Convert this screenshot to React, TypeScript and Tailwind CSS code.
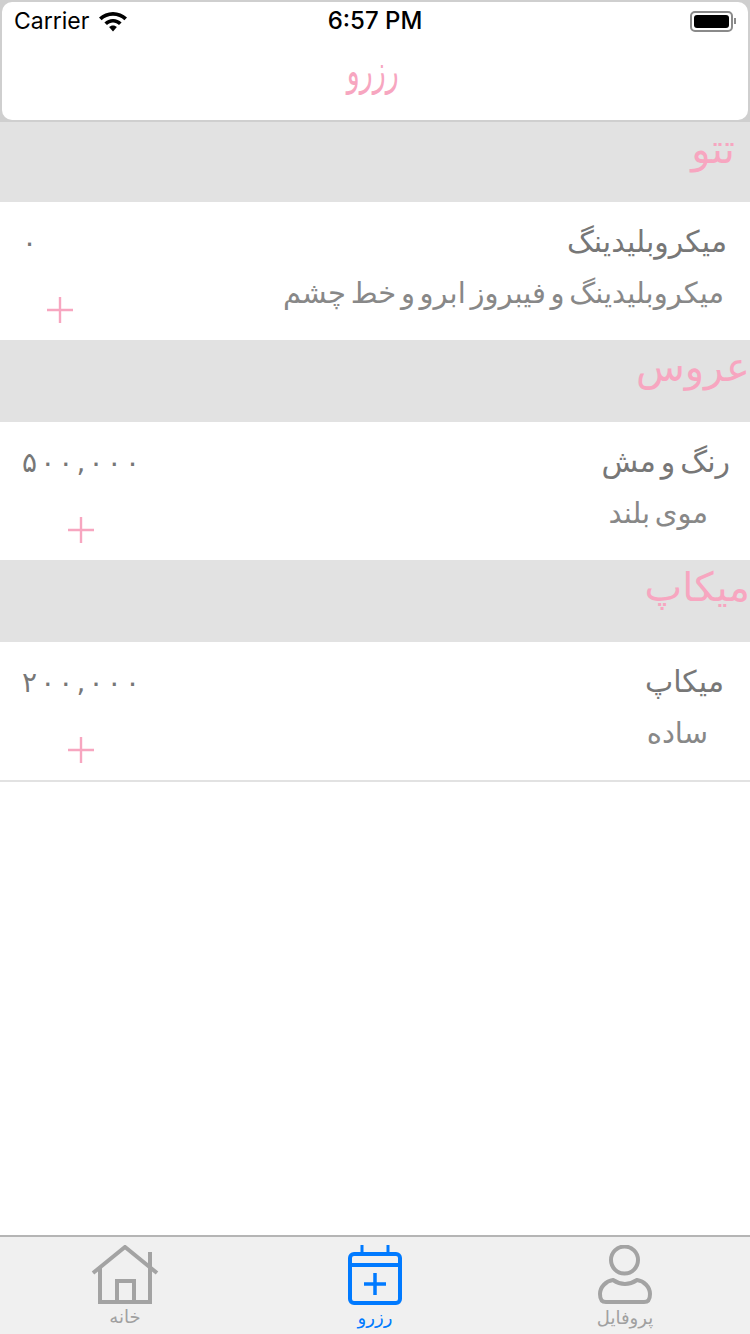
import type { ReactNode } from 'react'

const arabic = 'font-["DejaVu_Sans",sans-serif]'

function SectionHeader({ title, className }: { title: string; className: string }) {
  return (
    <div dir="rtl" className={`bg-[#e2e2e2] text-[40px] leading-[54px] text-[#f7a6c0] ${arabic} ${className}`}>
      {title}
    </div>
  )
}

function Plus() {
  return (
    <svg width="26" height="26" viewBox="0 0 26 26" fill="none" stroke="#f7a6c0" strokeWidth="2.4">
      <path d="M13 0v26M0 13h26" />
    </svg>
  )
}

type RowProps = {
  name: string
  detail: string
  price: string
  namePad: string
  detailPad: string
  priceWidth: string
  bordered?: boolean
}

function ServiceRow({ name, detail, price, namePad, detailPad, priceWidth, bordered }: RowProps) {
  return (
    <div className={`flex justify-between bg-white pl-[22px] pt-[22px] ${arabic} ${bordered ? 'h-[140px] border-b-2 border-[#e2e2e2]' : 'h-[138px]'}`}>
      <div className={`flex flex-col ${priceWidth}`}>
        {/* letter spacing has no effect on these digits, so they are spread with flex */}
        <div dir="ltr" className="mt-[1px] flex h-[35px] justify-between text-[28px] leading-[36px] text-[#777]">
          {price.split('').map((ch, i) => (
            <span key={i}>{ch}</span>
          ))}
        </div>
        <div className="mt-[37px] flex justify-center"><Plus /></div>
      </div>
      <div dir="rtl" className="flex flex-col text-[#777] [word-spacing:-4.5px]">
        <div className={`h-[36px] text-[30px] leading-[36px] ${namePad}`}>{name}</div>
        <div className={`mt-[15px] text-[29px] leading-[36px] text-[#888] ${detailPad}`}>{detail}</div>
      </div>
    </div>
  )
}

function TabItem({ icon, label, color, mt }: { icon: ReactNode; label: string; color: string; mt: string }) {
  return (
    <div className="flex flex-1 flex-col items-center pt-[8px]">
      {icon}
      <div className={`text-[18px] leading-[22px] ${arabic} ${color} ${mt}`}>{label}</div>
    </div>
  )
}

export default function App() {
  return (
    <div className="flex h-[1334px] w-[750px] flex-col overflow-hidden bg-white">
      <div className="bg-[#cfcfcf] p-[2px]">
        <div className="h-[118px] rounded-[10px] bg-white">
          <div className="flex h-[38px] items-center justify-between px-[12px] font-['Inter',sans-serif] text-[24px] text-black">
            <div className="flex w-[200px] items-center gap-[9px]">
              <span className="text-[23px]">Carrier</span>
              <svg width="30" height="24" viewBox="0 0 30 24" fill="#000">
                <path d="M15 3C9.600 3 4.800 5.100 1 8.600l2.600 2.700C6.600 8.500 10.600 6.800 15 6.800s8.400 1.700 11.400 4.500L29 8.600C25.200 5.100 20.400 3 15 3z" />
                <path d="M15 10c-3.300 0-6.300 1.300-8.600 3.400L9 16c1.600-1.500 3.700-2.400 6-2.400s4.400.9 6 2.400l2.600-2.600C21.300 11.300 18.300 10 15 10z" />
                <path d="M15 16.500c-1.500 0-2.900.6-3.900 1.600L15 22.500l3.900-4.400c-1-1-2.400-1.600-3.900-1.600z" />
              </svg>
            </div>
            <span className="font-medium">6:57 PM</span>
            <div className="flex w-[200px] items-center justify-end">
              <div className="flex h-[21px] w-[43px] items-center rounded-[5px] border-2 border-[#8a8a8a] p-[2px]">
                <div className="h-full w-full rounded-[3px] bg-black" />
              </div>
              <div className="ml-[1px] h-[6px] w-[2px] bg-[#8a8a8a]" />
            </div>
          </div>
          <div dir="rtl" className={`mt-[1px] scale-x-[0.64] pr-[7px] text-center text-[42px] leading-[60px] text-[#f7a6c0] ${arabic}`}>
            رزرو
          </div>
        </div>
      </div>

      <SectionHeader title="تتو" className="h-[80px] pr-[15px]" />
      <ServiceRow
        name="میکروبلیدینگ"
        detail="میکروبلیدینگ و فیبروز ابرو و خط چشم"
        price="۰"
        namePad="pr-[23px]"
        detailPad="pr-[26px]"
        priceWidth="w-[76px]"
      />
      <SectionHeader title="عروس" className="h-[82px]" />
      <ServiceRow
        name="رنگ و مش"
        detail="موی بلند"
        price="۵۰۰,۰۰۰"
        namePad="pr-[20px]"
        detailPad="pr-[42px]"
        priceWidth="w-[118px]"
      />
      <SectionHeader title="میکاپ" className="h-[82px]" />
      <ServiceRow
        name="میکاپ"
        detail="ساده"
        price="۲۰۰,۰۰۰"
        namePad="pr-[26px]"
        detailPad="pr-[42px]"
        priceWidth="w-[118px]"
        bordered
      />

      <div className="flex-1" />

      <div className="flex h-[99px] border-t-2 border-[#b5b5b5] bg-[#f0f0f0]">
        <TabItem
          label="خانه"
          color="text-[#a0a0a0]"
          mt="mt-[1px]"
          icon={
            <svg width="68" height="60" viewBox="0 0 68 60" fill="none" stroke="#a3a3a3" strokeWidth="4">
              <path d="M2 28 34 2l32 26" />
              <path d="M9 22v35h50V7" />
              <path d="M26 57V36h17v21" />
            </svg>
          }
        />
        <TabItem
          label="رزرو"
          color="text-[#007aff]"
          mt="mt-[2px]"
          icon={
            <svg width="54" height="60" viewBox="0 0 54 60" fill="none" stroke="#007aff" strokeWidth="4">
              <rect x="2" y="9" width="50" height="49" rx="4" />
              <path d="M2 20h50" />
              <path d="M14 0v9M40 0v9" strokeWidth="3" />
              <path d="M27 28v22M16 39h22" strokeWidth="3.500" />
            </svg>
          }
        />
        <TabItem
          label="پروفایل"
          color="text-[#a0a0a0]"
          mt="mt-[2px]"
          icon={
            <svg width="54" height="60" viewBox="0 0 54 60" fill="none" stroke="#a3a3a3" strokeWidth="4">
              <ellipse cx="26.500" cy="15" rx="13.500" ry="13.500" />
              <path d="M15 35C8 36 2 42 2 49c0 6 2 8 6 8h38c4 0 6-2 6-8 0-7-6-13-13-14-3 2-7 4-12 4s-9-2-12-4z" />
            </svg>
          }
        />
      </div>
    </div>
  )
}
